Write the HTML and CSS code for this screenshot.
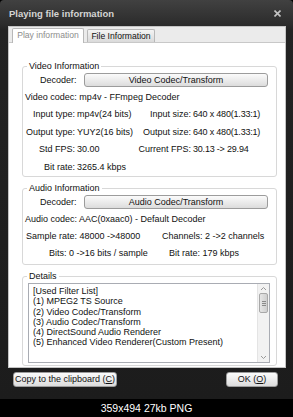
FILE: index.html
```html
<!DOCTYPE html>
<html lang="en">
<head>
  <meta charset="UTF-8" />
  <title>Playing file information</title>
  <link rel="stylesheet" href="styles.css">
</head>
<body>
  <div class="window">
    <div class="titlebar">
      <span>Playing file information</span>
      <svg class="close" width="7" height="7" viewBox="0 0 7 7">
        <path d="M0.5 0.5 L6.5 6.5 M6.5 0.5 L0.5 6.5" stroke="#c4c4c4" stroke-width="1.6" />
      </svg>
    </div>

    <div class="client">
      <div class="tabs">
        <div class="tab active">Play information</div>
        <div class="tab">File Information</div>
      </div>

      <div class="page">
        <fieldset>
          <legend>Video Information</legend>
          <div class="deco">
            <span class="lbl">Decoder:</span>
            <button>Video Codec/Transform</button>
          </div>
          <div class="row"><span class="wide">Video codec: mp4v - FFmpeg Decoder</span></div>
          <div class="row">
            <span class="k">Input type:</span><span class="v">mp4v(24 bits)</span>
            <span class="k2">Input size:</span><span class="v2">640 x 480(1.33:1)</span>
          </div>
          <div class="row">
            <span class="k">Output type:</span><span class="v">YUY2(16 bits)</span>
            <span class="k2">Output size:</span><span class="v2">640 x 480(1.33:1)</span>
          </div>
          <div class="row">
            <span class="k">Std FPS:</span><span class="v">30.00</span>
            <span class="k2">Current FPS:</span><span class="v2">30.13 -&gt; 29.94</span>
          </div>
          <div class="row">
            <span class="k">Bit rate:</span><span class="v">3265.4 kbps</span>
          </div>
        </fieldset>

        <fieldset class="audio">
          <legend>Audio Information</legend>
          <div class="deco">
            <span class="lbl">Decoder:</span>
            <button>Audio Codec/Transform</button>
          </div>
          <div class="row"><span class="wide">Audio codec: AAC(0xaac0) - Default Decoder</span></div>
          <div class="row">
            <span class="a1">Sample rate: 48000 -&gt;48000</span>
            <span>Channels: 2 -&gt;2 channels</span>
          </div>
          <div class="row">
            <span class="a2">Bits: 0 -&gt;16 bits / sample</span>
            <span>Bit rate: 179 kbps</span>
          </div>
        </fieldset>

        <fieldset class="details">
          <legend>Details</legend>
          <div class="list">
            <div class="items">
              <div>[Used Filter List]</div>
              <div>(1) MPEG2 TS Source</div>
              <div>(2) Video Codec/Transform</div>
              <div>(3) Audio Codec/Transform</div>
              <div>(4) DirectSound Audio Renderer</div>
              <div>(5) Enhanced Video Renderer(Custom Present)</div>
            </div>
            <div class="scroll">
              <svg width="11" height="9" viewBox="0 0 11 9"><path d="M3 6 L5.5 3.5 L8 6" fill="none" stroke="#9a9a9a" stroke-width="1" /></svg>
              <div class="thumb"><i></i><i></i><i></i></div>
              <div class="track"></div>
              <svg width="11" height="9" viewBox="0 0 11 9"><path d="M3 3 L5.5 5.5 L8 3" fill="none" stroke="#9a9a9a" stroke-width="1" /></svg>
            </div>
          </div>
        </fieldset>
      </div>
    </div>

    <div class="actions">
      <button class="copy">Copy to the clipboard (<u>C</u>)</button>
      <button class="ok">OK (<u>O</u>)</button>
    </div>
  </div>
  <div class="caption">359x494 27kb PNG</div>
</body>
</html>
```

FILE: styles.css
```css
body {
  margin: 0;
  background: #000;
  font-family: "Liberation Sans", Arial, sans-serif;
  font-size: 9px;
  color: #111;
}
.window {
  width: 293px;
  height: 399px;
  box-sizing: border-box;
  padding: 0 7px 0 8px;
  background: linear-gradient(#414141, #2c2c2c 24px, #232323 30px, #1c1c1c);
  border-radius: 4px 4px 0 0;
}
.titlebar {
  height: 26px;
  box-sizing: border-box;
  padding: 1px 5px 0 1px;
  display: flex;
  align-items: center;
  justify-content: space-between;
  color: #d4d4d4;
  font-weight: bold;
  font-size: 9.5px;
}
.client {
  height: 342px;
  box-sizing: border-box;
  border: 1px solid #c4c4c4;
  background: #fff;
}
.tabs {
  height: 16px;
  box-sizing: border-box;
  background: #ebebeb;
  border-bottom: 1px solid #c8c8c8;
  display: flex;
  align-items: flex-end;
  gap: 3px;
  padding-left: 3px;
}
.tab {
  height: 13px;
  box-sizing: border-box;
  width: 68px;
  border: 1px solid #b8b8b8;
  border-bottom: none;
  border-radius: 2px 2px 0 0;
  background: linear-gradient(#f4f4f4, #dadada);
  font-size: 8.6px;
  line-height: 12px;
  text-align: center;
  color: #111;
}
.tab.active {
  width: 72px;
  height: 15px;
  margin-bottom: -1px;
  background: #fff;
  color: #8d8d8d;
}
.page {
  height: 324px;
  box-sizing: border-box;
  padding: 17px 8px 0 13px;
}
fieldset {
  margin: 0;
  padding: 0;
  min-width: 0;
  border: 1px solid #d8d8d8;
  border-radius: 3px;
}
fieldset + fieldset {
  margin-top: 5px;
}
legend {
  margin-left: 4px;
  padding: 0 2px;
  line-height: 12px;
}
button {
  font: inherit;
  color: #111;
  padding: 0;
  border: 1px solid #9c9c9c;
  border-radius: 3px;
  background: linear-gradient(#fbfbfb, #ececec 50%, #dcdcdc);
}
.deco {
  display: flex;
  align-items: center;
  height: 16px;
  padding-left: 17px;
}
.deco .lbl {
  width: 44px;
}
.deco button {
  width: 184px;
  height: 14px;
  line-height: 12px;
}
.row {
  display: flex;
  align-items: center;
  height: 17.5px;
  white-space: nowrap;
}
.wide {
  padding-left: 2px;
}
.k {
  width: 52px;
  text-align: right;
}
.v {
  width: 60px;
  padding-left: 2px;
}
.k2 {
  width: 54px;
  text-align: right;
}
.v2 {
  padding-left: 2px;
  letter-spacing: -0.2px;
}
fieldset:first-of-type {
  padding-bottom: 0.5px;
}
.audio .row {
  height: 17px;
}
.audio {
  padding-bottom: 3px;
}
.a1 {
  width: 136px;
  padding-left: 3px;
}
.a2 {
  width: 120px;
  padding-left: 26px;
}
.list {
  display: flex;
  height: 80px;
  margin: 1px 6px 2px 5px;
  border: 1px solid #a9acb3;
  box-sizing: border-box;
}
.items {
  flex: 1;
  padding: 2px 4px;
  line-height: 10.3px;
  white-space: nowrap;
  overflow: hidden;
}
.scroll {
  width: 11px;
  display: flex;
  flex-direction: column;
  background: #f2f2f2;
  border-left: 1px solid #e4e4e4;
}
.thumb {
  height: 20px;
  margin: 0 1px;
  box-sizing: border-box;
  border: 1px solid #a8a8a8;
  border-radius: 2px;
  background: linear-gradient(90deg, #e6e6e6, #cfcfcf);
  display: flex;
  flex-direction: column;
  justify-content: center;
  align-items: center;
  gap: 1px;
}
.thumb i {
  width: 4px;
  height: 1px;
  background: #8a8a8a;
}
.track {
  flex: 1;
}
.actions {
  display: flex;
  justify-content: space-between;
  padding: 4px 8px 0 5px;
}
.actions button {
  height: 15px;
  line-height: 13px;
}
.copy {
  width: 104px;
}
.ok {
  width: 52px;
}
.caption {
  height: 18px;
  line-height: 18px;
  text-align: center;
  color: #fff;
  font-size: 10.5px;
}
```
